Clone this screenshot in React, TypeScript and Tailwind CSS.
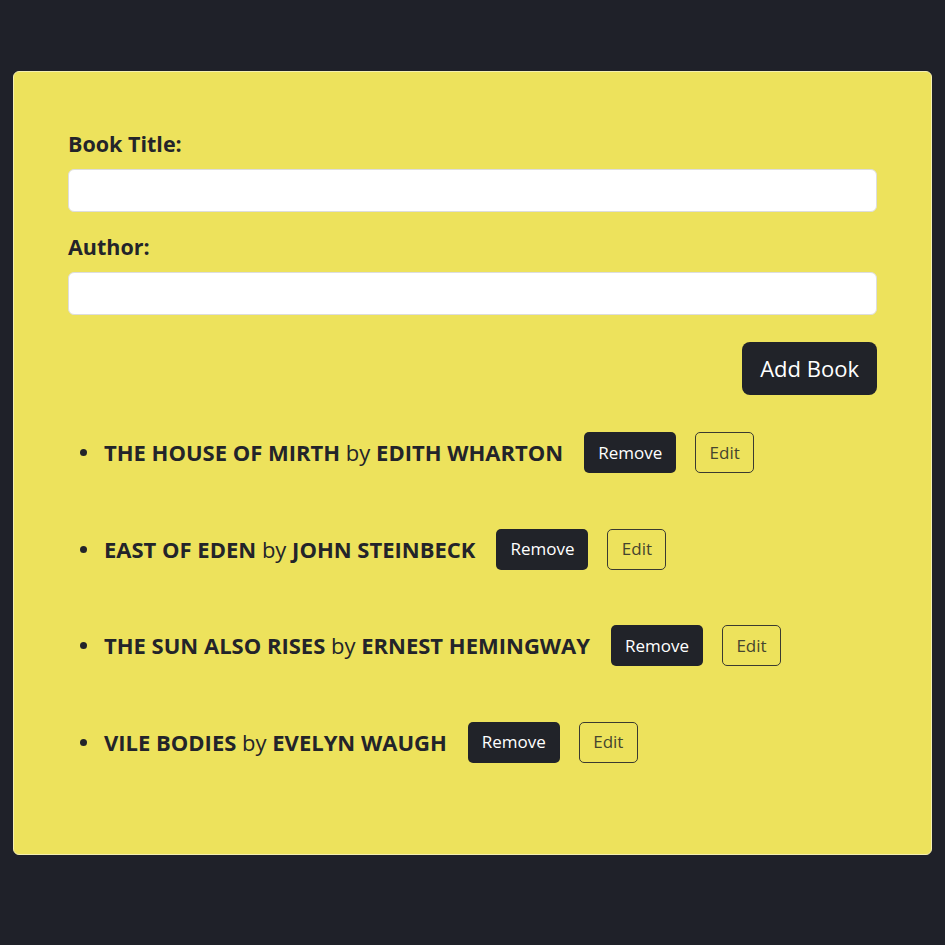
import React, { useState } from "react";

type Book = { title: string; author: string };

function App() {
  const [books, setBooks] = useState<Book[]>([
    { title: "The House of Mirth", author: "Edith Wharton" },
    { title: "East of Eden", author: "John Steinbeck" },
    { title: "The Sun Also Rises", author: "Ernest Hemingway" },
    { title: "Vile Bodies", author: "Evelyn Waugh" },
  ]);
  const [title, setTitle] = useState("");
  const [author, setAuthor] = useState("");

  const addBook = () => {
    if (!title || !author) return;
    setBooks([...books, { title, author }]);
    setTitle("");
    setAuthor("");
  };

  return (
    <div
      className="min-h-screen bg-[#1f2129] pt-[71px] px-[13px]"
      style={{ fontFamily: '"Open Sans", "Noto Sans", sans-serif' }}
    >
      {/* Card */}
      <div className="bg-[#ede25c] border border-[#f5efb0] rounded-[6px] h-[784px] px-[54px] pt-[58px] text-[#23242a]">
        <label className="block text-[21.5px] font-bold leading-[28px]">Book Title:</label>
        <input
          value={title}
          onChange={(e) => setTitle(e.target.value)}
          className="block w-full h-[43px] mt-[11px] bg-white rounded-[6px] border border-[#ddd] outline-none px-3"
        />
        <label className="block text-[21.5px] font-bold leading-[28px] mt-[21px]">Author:</label>
        <input
          value={author}
          onChange={(e) => setAuthor(e.target.value)}
          className="block w-full h-[43px] mt-[11px] bg-white rounded-[6px] border border-[#ddd] outline-none px-3"
        />
        <div className="flex justify-end mt-[27px]">
          <button
            onClick={addBook}
            className="bg-[#212329] text-white text-[22px] rounded-[8px] h-[53px] px-[18px]"
          >
            Add Book
          </button>
        </div>

        <ul className="mt-[37px] pl-[12px]">
          {books.map((b, i) => (
            <li key={i} className="flex items-center h-[41px] mb-[55.5px]">
              <span className="w-[7px] h-[7px] rounded-full bg-[#23242a] mr-[17px]" />
              <span className="text-[22px]">
                <b className="uppercase">{b.title}</b> by <b className="uppercase">{b.author}</b>
              </span>
              <button
                onClick={() => setBooks(books.filter((_, j) => j !== i))}
                className="ml-[21px] bg-[#212329] text-white text-[17px] rounded-[5px] h-[41px] w-[92px]"
              >
                Remove
              </button>
              <button className="ml-[19px] border border-[#3a3a30] text-[#45452f] text-[17px] rounded-[5px] h-[41px] w-[59px]">
                Edit
              </button>
            </li>
          ))}
        </ul>
      </div>
    </div>
  );
}

export default App;
